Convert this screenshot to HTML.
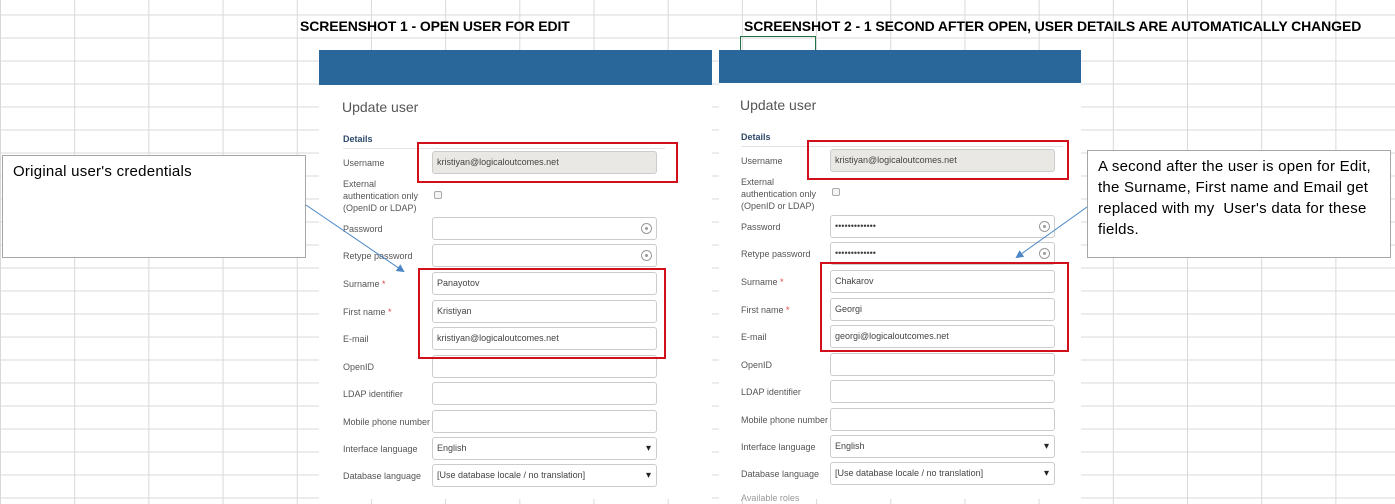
<!DOCTYPE html>
<html><head><meta charset="utf-8"><style>
*{margin:0;padding:0;box-sizing:border-box}
body{width:1395px;height:499px;overflow:hidden;position:relative;background:#fff;
background-image:linear-gradient(to right,#d9d9d9 1px,transparent 1px),linear-gradient(to bottom,#d9d9d9 1px,transparent 1px);
background-size:74.2px 23px;background-position:0 14.5px;font-family:"Liberation Sans",sans-serif}
.a{position:absolute}
.t{font-family:"Liberation Sans",sans-serif;font-weight:bold;font-size:14px;color:#000;white-space:nowrap;letter-spacing:-0.1px}
.panel{position:absolute;background:#fff}
.bar{position:absolute;background:#29669a}
.lbl{position:absolute;font-size:9px;color:#555;line-height:12px}
.req{color:#d44}
.inp{position:absolute;height:23px;border:1px solid #ccc;border-radius:3px;background:#fff;font-size:9px;color:#444;padding-left:4px;line-height:21px}
.ro{background:#e9e8e4}
.sel::after{content:"▾";position:absolute;right:5px;top:0;font-size:10px;color:#222}
.eye{position:absolute;right:4px;top:5px;width:11px;height:11px;border:1px solid #999;border-radius:50%}
.eye::after{content:"";position:absolute;left:3px;top:3px;width:3px;height:3px;background:#999;border-radius:50%}
.red{position:absolute;border:2px solid #d0101a}
.call{position:absolute;background:#fff;border:1px solid #a6a6a6;font-family:"Liberation Sans",sans-serif;font-size:15px;color:#000;line-height:21px;padding:5px 10px;white-space:nowrap;letter-spacing:0.25px}
.cb{position:absolute;width:8px;height:8px;border:1px solid #aaa;border-radius:2px;background:#f4f4f4}
h1{position:absolute;font-weight:normal;font-size:14px;color:#555}
.det{position:absolute;font-size:9px;font-weight:bold;color:#2e4a6b}
.hr{position:absolute;height:1px;background:#e3e3e3}
</style></head><body>
<div class="a t" style="left:300px;top:18px">SCREENSHOT 1 - OPEN USER FOR EDIT</div>
<div class="a t" style="left:744px;top:18px">SCREENSHOT 2 - 1 SECOND AFTER OPEN, USER DETAILS ARE AUTOMATICALLY CHANGED</div>
<div class="a" style="left:740px;top:36px;width:76px;height:16px;border:1px solid #217346"></div>

<!-- panel 1 -->
<div class="panel" style="left:319px;top:50px;width:393px;height:449px"></div>
<div class="bar" style="left:319px;top:50px;width:393px;height:35px"></div>
<h1 style="left:342px;top:99px">Update user</h1>
<div class="det" style="left:343px;top:134px">Details</div>
<div class="hr" style="left:343px;top:148px;width:322px"></div>
<div class="lbl" style="left:343px;top:157px">Username</div>
<div class="inp ro" style="left:432px;top:151px;width:225px">kristiyan@logicaloutcomes.net</div>
<div class="lbl" style="left:343px;top:178px">External<br>authentication only<br>(OpenID or LDAP)</div>
<div class="cb" style="left:434px;top:191px"></div>
<div class="lbl" style="left:343px;top:223px">Password</div>
<div class="inp" style="left:432px;top:217px;width:225px"><span class="eye"></span></div>
<div class="lbl" style="left:343px;top:250px">Retype password</div>
<div class="inp" style="left:432px;top:244px;width:225px"><span class="eye"></span></div>
<div class="lbl" style="left:343px;top:278px">Surname <span class="req">*</span></div>
<div class="inp" style="left:432px;top:272px;width:225px">Panayotov</div>
<div class="lbl" style="left:343px;top:306px">First name <span class="req">*</span></div>
<div class="inp" style="left:432px;top:300px;width:225px">Kristiyan</div>
<div class="lbl" style="left:343px;top:333px">E-mail</div>
<div class="inp" style="left:432px;top:327px;width:225px">kristiyan@logicaloutcomes.net</div>
<div class="lbl" style="left:343px;top:361px">OpenID</div>
<div class="inp" style="left:432px;top:355px;width:225px"></div>
<div class="lbl" style="left:343px;top:388px">LDAP identifier</div>
<div class="inp" style="left:432px;top:382px;width:225px"></div>
<div class="lbl" style="left:343px;top:416px">Mobile phone number</div>
<div class="inp" style="left:432px;top:410px;width:225px"></div>
<div class="lbl" style="left:343px;top:443px">Interface language</div>
<div class="inp sel" style="left:432px;top:437px;width:225px">English</div>
<div class="lbl" style="left:343px;top:470px">Database language</div>
<div class="inp sel" style="left:432px;top:464px;width:225px">[Use database locale / no translation]</div>
<div class="red" style="left:417px;top:142px;width:261px;height:41px"></div>
<div class="red" style="left:418px;top:268px;width:248px;height:91px"></div>

<!-- panel 2 -->
<div class="panel" style="left:719px;top:50px;width:362px;height:449px"></div>
<div class="bar" style="left:719px;top:50px;width:362px;height:33px"></div>
<h1 style="left:740px;top:97px">Update user</h1>
<div class="det" style="left:741px;top:132px">Details</div>
<div class="hr" style="left:741px;top:146px;width:322px"></div>
<div class="lbl" style="left:741px;top:155px">Username</div>
<div class="inp ro" style="left:830px;top:149px;width:225px">kristiyan@logicaloutcomes.net</div>
<div class="lbl" style="left:741px;top:176px">External<br>authentication only<br>(OpenID or LDAP)</div>
<div class="cb" style="left:832px;top:188px"></div>
<div class="lbl" style="left:741px;top:221px">Password</div>
<div class="inp" style="left:830px;top:215px;width:225px">•••••••••••••<span class="eye"></span></div>
<div class="lbl" style="left:741px;top:248px">Retype password</div>
<div class="inp" style="left:830px;top:242px;width:225px">•••••••••••••<span class="eye"></span></div>
<div class="lbl" style="left:741px;top:276px">Surname <span class="req">*</span></div>
<div class="inp" style="left:830px;top:270px;width:225px">Chakarov</div>
<div class="lbl" style="left:741px;top:304px">First name <span class="req">*</span></div>
<div class="inp" style="left:830px;top:298px;width:225px">Georgi</div>
<div class="lbl" style="left:741px;top:331px">E-mail</div>
<div class="inp" style="left:830px;top:325px;width:225px">georgi@logicaloutcomes.net</div>
<div class="lbl" style="left:741px;top:359px">OpenID</div>
<div class="inp" style="left:830px;top:353px;width:225px"></div>
<div class="lbl" style="left:741px;top:386px">LDAP identifier</div>
<div class="inp" style="left:830px;top:380px;width:225px"></div>
<div class="lbl" style="left:741px;top:414px">Mobile phone number</div>
<div class="inp" style="left:830px;top:408px;width:225px"></div>
<div class="lbl" style="left:741px;top:441px">Interface language</div>
<div class="inp sel" style="left:830px;top:435px;width:225px">English</div>
<div class="lbl" style="left:741px;top:468px">Database language</div>
<div class="inp sel" style="left:830px;top:462px;width:225px">[Use database locale / no translation]</div>
<div class="lbl" style="left:741px;top:492px;color:#999">Available roles</div>
<div class="red" style="left:807px;top:140px;width:262px;height:40px"></div>
<div class="red" style="left:820px;top:262px;width:249px;height:90px"></div>

<!-- callouts -->
<div class="call" style="left:2px;top:155px;width:304px;height:103px">Original user's credentials</div>
<div class="call" style="left:1087px;top:150px;width:304px;height:108px">A second after the user is open for Edit,<br>the Surname, First name and Email get<br>replaced with my&nbsp; User's data for these<br>fields.</div>
<svg class="a" style="left:0;top:0" width="1395" height="499">
<defs><marker id="ar" markerWidth="8" markerHeight="8" refX="6" refY="4" orient="auto"><path d="M0,0 L8,4 L0,8 z" fill="#4a86c5"/></marker></defs>
<line x1="306" y1="205" x2="403" y2="271" stroke="#4a86c5" stroke-width="1" marker-end="url(#ar)"/>
<line x1="1087" y1="207" x2="1017" y2="257" stroke="#4a86c5" stroke-width="1" marker-end="url(#ar)"/>
</svg>
</body></html>
